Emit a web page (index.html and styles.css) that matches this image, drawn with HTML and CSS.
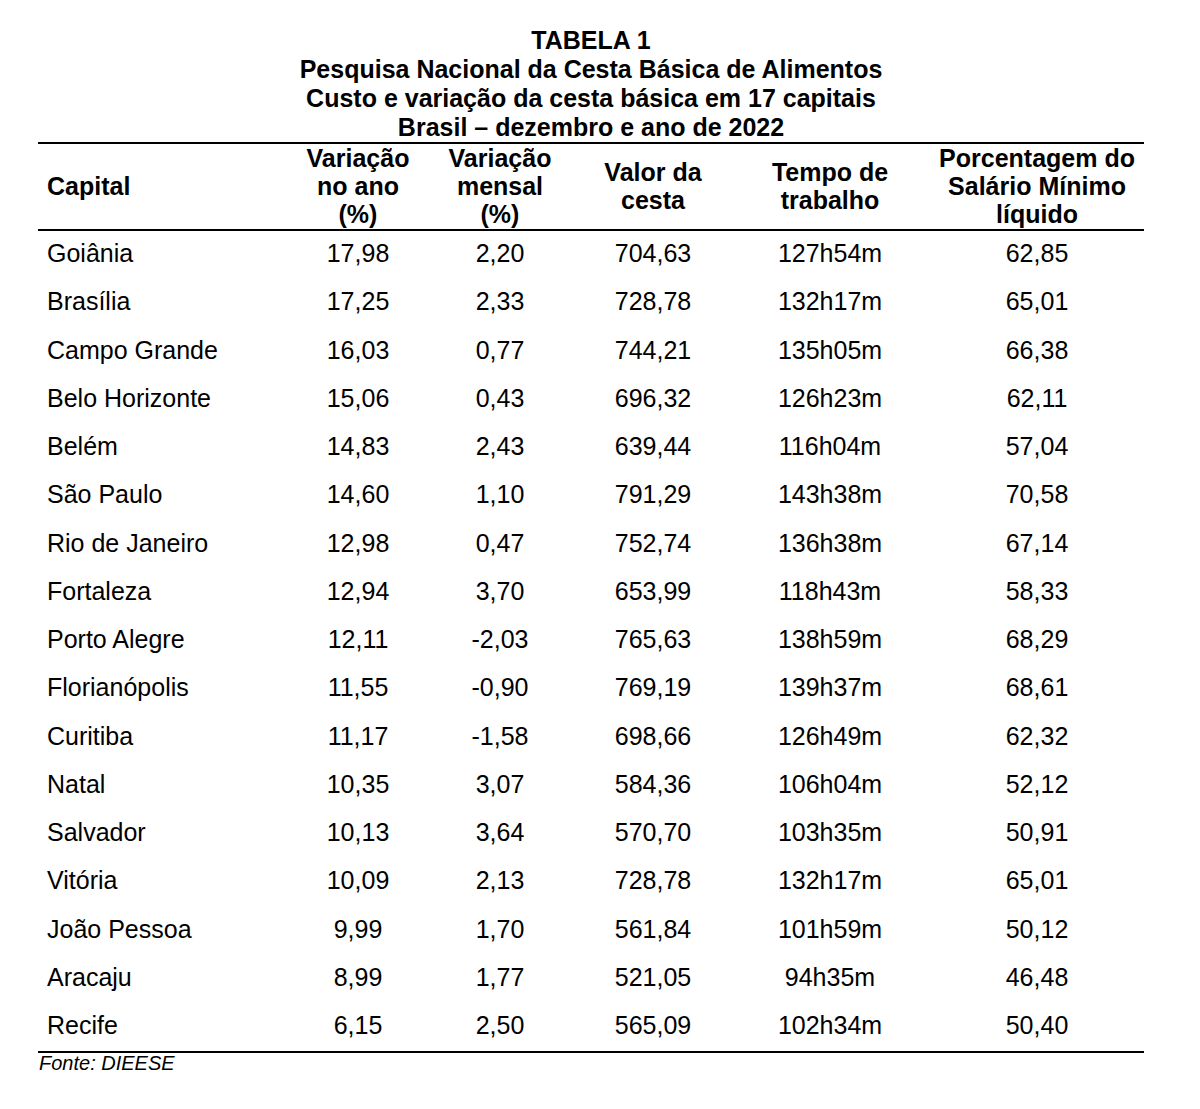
FILE: index.html
```html
<!DOCTYPE html>
<html lang="pt-BR">
<head>
<meta charset="utf-8">
<title>Tabela 1</title>
<link rel="stylesheet" href="styles.css">
</head>
<body>
<div class="page">
  <div class="title">
    <div>TABELA 1</div>
    <div>Pesquisa Nacional da Cesta Básica de Alimentos</div>
    <div>Custo e variação da cesta básica em 17 capitais</div>
    <div>Brasil – dezembro e ano de 2022</div>
  </div>
  <table class="data">
    <colgroup>
      <col class="c1"><col class="c2"><col class="c3"><col class="c4"><col class="c5"><col class="c6">
    </colgroup>
    <thead>
      <tr>
        <th class="left">Capital</th>
        <th>Variação<br>no ano<br>(%)</th>
        <th>Variação<br>mensal<br>(%)</th>
        <th>Valor da<br>cesta</th>
        <th>Tempo de<br>trabalho</th>
        <th>Porcentagem do<br>Salário Mínimo<br>líquido</th>
      </tr>
    </thead>
    <tbody>
      <tr><td class="left">Goiânia</td><td>17,98</td><td>2,20</td><td>704,63</td><td>127h54m</td><td>62,85</td></tr>
      <tr><td class="left">Brasília</td><td>17,25</td><td>2,33</td><td>728,78</td><td>132h17m</td><td>65,01</td></tr>
      <tr><td class="left">Campo Grande</td><td>16,03</td><td>0,77</td><td>744,21</td><td>135h05m</td><td>66,38</td></tr>
      <tr><td class="left">Belo Horizonte</td><td>15,06</td><td>0,43</td><td>696,32</td><td>126h23m</td><td>62,11</td></tr>
      <tr><td class="left">Belém</td><td>14,83</td><td>2,43</td><td>639,44</td><td>116h04m</td><td>57,04</td></tr>
      <tr><td class="left">São Paulo</td><td>14,60</td><td>1,10</td><td>791,29</td><td>143h38m</td><td>70,58</td></tr>
      <tr><td class="left">Rio de Janeiro</td><td>12,98</td><td>0,47</td><td>752,74</td><td>136h38m</td><td>67,14</td></tr>
      <tr><td class="left">Fortaleza</td><td>12,94</td><td>3,70</td><td>653,99</td><td>118h43m</td><td>58,33</td></tr>
      <tr><td class="left">Porto Alegre</td><td>12,11</td><td>-2,03</td><td>765,63</td><td>138h59m</td><td>68,29</td></tr>
      <tr><td class="left">Florianópolis</td><td>11,55</td><td>-0,90</td><td>769,19</td><td>139h37m</td><td>68,61</td></tr>
      <tr><td class="left">Curitiba</td><td>11,17</td><td>-1,58</td><td>698,66</td><td>126h49m</td><td>62,32</td></tr>
      <tr><td class="left">Natal</td><td>10,35</td><td>3,07</td><td>584,36</td><td>106h04m</td><td>52,12</td></tr>
      <tr><td class="left">Salvador</td><td>10,13</td><td>3,64</td><td>570,70</td><td>103h35m</td><td>50,91</td></tr>
      <tr><td class="left">Vitória</td><td>10,09</td><td>2,13</td><td>728,78</td><td>132h17m</td><td>65,01</td></tr>
      <tr><td class="left">João Pessoa</td><td>9,99</td><td>1,70</td><td>561,84</td><td>101h59m</td><td>50,12</td></tr>
      <tr><td class="left">Aracaju</td><td>8,99</td><td>1,77</td><td>521,05</td><td>94h35m</td><td>46,48</td></tr>
      <tr><td class="left">Recife</td><td>6,15</td><td>2,50</td><td>565,09</td><td>102h34m</td><td>50,40</td></tr>
    </tbody>
  </table>
  <div class="source">Fonte: DIEESE</div>
</div>
</body>
</html>
```
FILE: styles.css
```css
html, body {
  margin: 0;
  padding: 0;
  background: #fff;
}
body {
  font-family: "Liberation Sans", Arial, Helvetica, sans-serif;
  color: #000;
}
.page {
  width: 1106px;
  margin-left: 38px;
  padding-top: 26px;
}
.title {
  text-align: center;
  font-weight: bold;
  font-size: 25px;
  line-height: 29px;
}
.data {
  width: 1106px;
  border-collapse: collapse;
  table-layout: fixed;
  font-size: 25px;
}
.c1 { width: 254px; }
.c2 { width: 132px; }
.c3 { width: 152px; }
.c4 { width: 154px; }
.c5 { width: 200px; }
.c6 { width: 214px; }
.data thead tr {
  border-top: 2px solid #000;
  border-bottom: 2px solid #000;
}
.data th {
  font-weight: bold;
  line-height: 28px;
  height: 84px;
  padding: 0 0 1px;
  text-align: center;
  vertical-align: middle;
}
.data td {
  height: 44.25px;
  padding: 0 0 4px;
  line-height: 28px;
  text-align: center;
  vertical-align: middle;
}
.data tbody tr:last-child {
  border-bottom: 2px solid #000;
}
.data th.left,
.data td.left {
  text-align: left;
  padding-left: 9px;
}
.source {
  font-style: italic;
  font-size: 20px;
  line-height: 20px;
  padding-left: 1px;
}
```
